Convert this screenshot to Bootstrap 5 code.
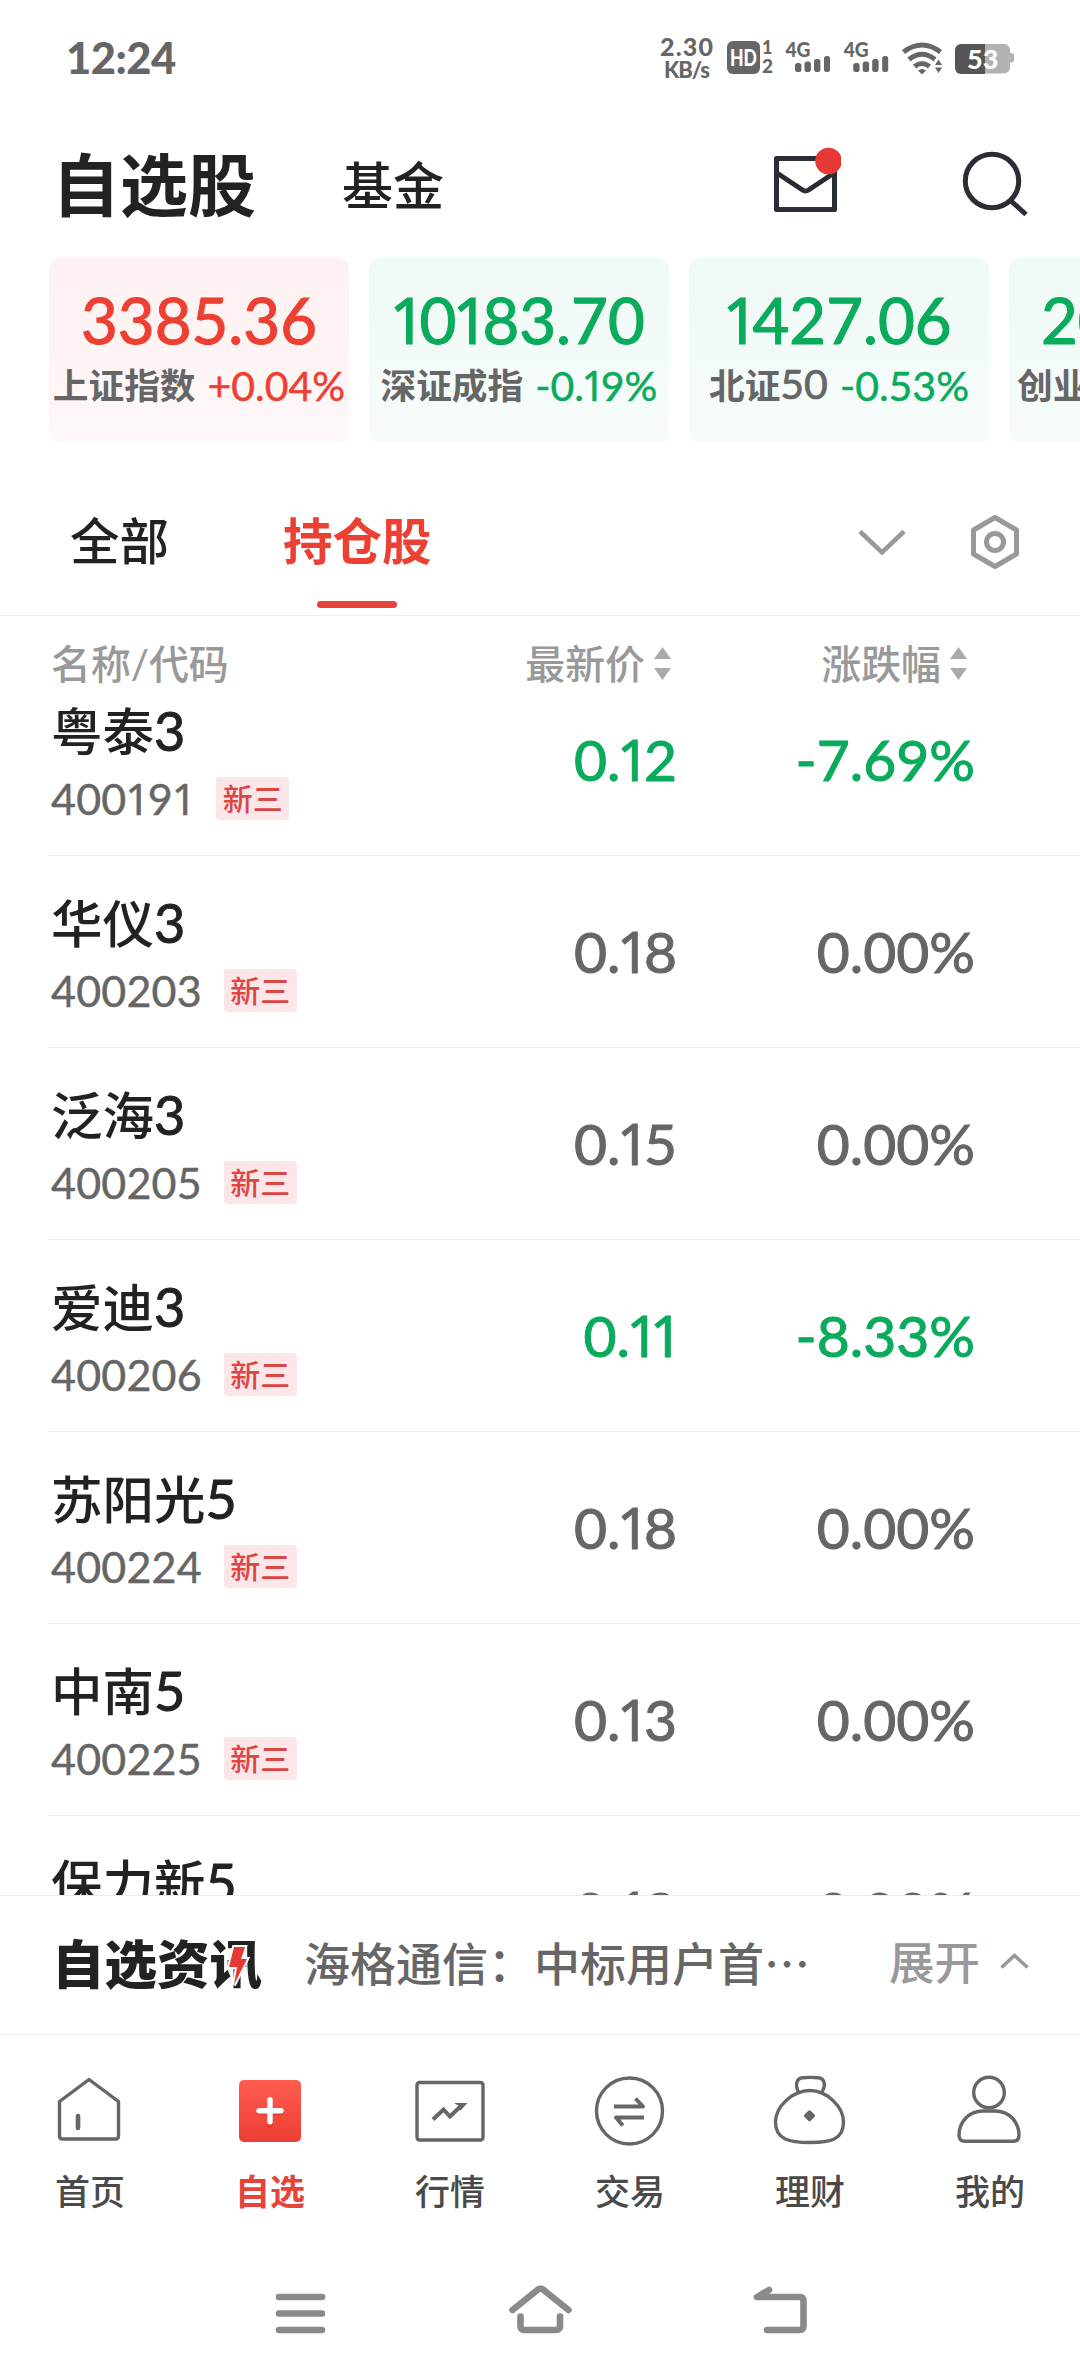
<!DOCTYPE html>
<html lang="zh-CN">
<head>
<meta charset="utf-8">
<meta name="viewport" content="width=device-width, initial-scale=1">
<title>自选股</title>
<link href="https://cdn.jsdelivr.net/npm/bootstrap@5.3.0/dist/css/bootstrap.min.css" rel="stylesheet">
<style>
  :root { --up:#ed4034; --down:#0aab5c; --ink:#222; --mid:#666; --soft:#999; --hair:#ececec; }
  body { font-family: Lato, "Noto Sans CJK SC", sans-serif; color: var(--ink); background:#fff; }
  .phone { width:1080px; height:2376px; overflow:hidden; line-height:1; }
  .phone svg { display:block; flex:none; }
  .up { color:var(--up); } .down { color:var(--down); } .flat { color:var(--mid); }
  /* narrow, footless figure one */
  .one { font-family:"Noto Sans",sans-serif; line-height:0; margin:0 -.1em 0 -.06em; }

  .statusbar { height:114px; padding:1px 65px 0 66px; color:var(--mid); }
  .clock { font-size:43.5px; font-weight:900; letter-spacing:-.5px; }

  .topbar { height:140px; padding:0 51px 3px 52px; }
  .title-main { font-size:68px; font-weight:700; padding-top:5px; }
  .title-sub { font-size:51px; font-weight:500; margin-left:86px; padding-top:5px; }

  .indices { padding:4px 0 0 49px; gap:20px; height:189px; }
  .index-card { width:300px; height:185px; border-radius:12px; padding-top:32px; }
  .index-card.rise { background:linear-gradient(#fdf2f1,#fff4f4 50%,#fef8f8); }
  .index-card.fall { background:linear-gradient(#f0f9f5,#f3fbf8 50%,#f7fcfa); }
  .index-num { font-size:63.5px; line-height:60px; -webkit-text-stroke:.018em; }
  .index-sub { font-size:41px; line-height:44px; margin-top:14px; white-space:nowrap; -webkit-text-stroke:.012em; }
  .index-sub .nm { font-size:35.7px; font-weight:700; color:var(--mid); margin-right:12px; -webkit-text-stroke:0; }
  .index-sub .nm b { font-size:41px; font-weight:400; line-height:0; -webkit-text-stroke:.018em; }

  .tabs { height:173px; padding:25px 59px 0 70px; border-bottom:1px solid var(--hair); }
  .tab-item { font-size:49.5px; font-weight:500; height:148px; position:relative; }
  .tab-item.on { color:var(--up); font-weight:700; margin-left:114px; }
  .tab-item.on::after { content:""; position:absolute; left:50%; margin-left:-40px; bottom:8px; width:80px; height:7px; border-radius:4px; background:#e5453a; }

  .thead { height:84px; padding:11px 105px 0 51px; font-size:39.9px; font-weight:500; color:var(--soft); }
  .thead svg { margin-left:9px; }
  .c-price { width:300px; } .c-pct { width:298px; }
  .thead .c-price { padding-right:6px; } .thead .c-pct { padding-right:8px; }

  .quotes { height:1195px; overflow:hidden; padding-left:49px; }
  .quote { height:192px; padding:0 105px 0 2px; border-bottom:1px solid var(--hair); }
  .quote:first-child { margin-top:-36px; }
  .q-name { font-size:51.5px; font-weight:500; line-height:60px; padding-top:2px; }
  .q-name b { font-size:54px; font-weight:400; line-height:0; -webkit-text-stroke:.018em; }
  .q-code { font-size:43px; color:var(--mid); line-height:43px; margin-top:16px; letter-spacing:.2px; -webkit-text-stroke:.01em; }
  .q-code .one { margin:0 -.05em 0 -.03em; }
  .q-tag { width:73px; height:43px; border-radius:4px; background:#fce7e8; color:#dd4444; font-size:30px; font-weight:500; line-height:42px; letter-spacing:0; margin-left:22px; -webkit-text-stroke:0; }
  .q-val { font-size:57px; -webkit-text-stroke:.018em; }

  .news { height:140px; padding:0 51px 8px 52px; border-top:1px solid var(--hair); border-bottom:1px solid var(--hair); font-family:"Noto Sans CJK SC",sans-serif; }
  .news-logo { font-size:52.5px; font-weight:900; position:relative; }
  .news-logo svg { position:absolute; left:176px; top:11px; overflow:visible; }
  .news-text { font-size:46px; font-weight:500; color:var(--mid); margin-left:42px; width:515px; white-space:nowrap; overflow:hidden; line-height:60px; }
  .news-more { font-size:45.5px; font-weight:500; color:var(--soft); margin-left:auto; }

  .tabbar { height:215px; padding-top:35px; font-size:35px; font-weight:500; }
  .tabbar a { width:180px; color:#4a4a4a; text-decoration:none; gap:24px; }
  .tabbar a.on { color:#e6443a; font-weight:700; }
  .tabbar svg { fill:none; stroke:#666; stroke-width:3.4; stroke-linejoin:round; }
  .sysbar { height:126px; fill:none; stroke:#8a8a8a; stroke-width:6.6; stroke-linecap:round; stroke-linejoin:round; }
</style>
</head>
<body>
<div class="phone d-flex flex-column">

  <div class="statusbar d-flex align-items-center justify-content-between">
    <span class="clock">12:24</span>
    <svg width="358" height="50" viewBox="657 33 358 50" fill="#666" font-family="Lato, sans-serif" font-weight="900">
      <text x="660" y="56" font-size="25" textLength="53">2.30</text>
      <text x="664" y="78" font-size="22" textLength="46">KB/s</text>
      <rect x="727" y="41" width="33" height="33" rx="6"/>
      <text x="730" y="65.500" font-size="22" fill="#fff" textLength="27" lengthAdjust="spacingAndGlyphs">HD</text>
      <text x="762" y="54" font-size="18">1</text>
      <text x="762" y="73" font-size="19">2</text>
      <g id="sig">
        <text x="785.5" y="57" font-size="21" textLength="25" lengthAdjust="spacingAndGlyphs">4G</text>
        <rect x="795" y="63" width="6.4" height="9" rx="2.5"/><rect x="804.5" y="61.5" width="6.4" height="10.5" rx="2.5"/>
        <rect x="814" y="59" width="6.4" height="13" rx="2.5"/><rect x="824" y="56" width="6" height="16" rx="2.5"/>
      </g>
      <use href="#sig" x="58.2"/>
      <g fill="none" stroke="#666" stroke-width="5">
        <path d="M903.5 52Q922 38 940.500 52M909 59.500Q922 49 935 59.500M914.500 66.500Q922 60.500 929.500 66.500"/>
      </g>
      <path d="M918 70.500Q922 67.500 926 70.500L922 74.500ZM935 65L938.500 59.500 942 65ZM935 67.500L938.500 73 942 67.500Z"/>
      <path d="M985 44h19a6 6 0 0 1 6 6v3h1.500q2.500 0 2.500 2.500v4.500q0 2.500-2.500 2.500h-1.500v5a6 6 0 0 1-6 6h-19z" fill="#b2b2b2"/>
      <path d="M985 44h-24a6 6 0 0 0-6 6v18a6 6 0 0 0 6 6h24z" fill="#555"/>
      <text x="967" y="69" font-size="27" fill="#fff">53</text>
    </svg>
  </div>

  <div class="topbar d-flex align-items-center">
    <span class="title-main">自选股</span>
    <span class="title-sub">基金</span>
    <svg class="ms-auto" width="68" height="72" viewBox="772 146 68 72" fill="none" stroke="#2a2d35" stroke-width="5" stroke-linejoin="round">
      <rect x="775.500" y="157.500" width="58" height="51"/>
      <path d="M776 172l25.500 17q3 2 6 0l25.500-17"/>
      <circle cx="827.500" cy="160" r="13.300" fill="#e63934" stroke="none"/>
    </svg>
    <svg width="68" height="72" viewBox="960 147 68 72" style="margin-left:120px" fill="none" stroke="#2a2d35" stroke-width="5">
      <circle cx="991" cy="181" r="26.700"/><path d="M1009 200l16 14.500"/>
    </svg>
  </div>

  <div class="indices d-flex overflow-hidden">
    <div class="index-card rise flex-shrink-0 text-center"><div class="index-num up">3385.36</div><div class="index-sub d-flex justify-content-center align-items-center"><span class="nm">上证指数</span><span class="up">+0.04%</span></div></div>
    <div class="index-card fall flex-shrink-0 text-center"><div class="index-num down"><span class="one">1</span>0<span class="one">1</span>83.70</div><div class="index-sub d-flex justify-content-center align-items-center"><span class="nm">深证成指</span><span class="down">-0.<span class="one">1</span>9%</span></div></div>
    <div class="index-card fall flex-shrink-0 text-center"><div class="index-num down"><span class="one">1</span>427.06</div><div class="index-sub d-flex justify-content-center align-items-center"><span class="nm">北证<b>50</b></span><span class="down">-0.53%</span></div></div>
    <div class="index-card fall flex-shrink-0 text-center"><div class="index-num down">2011.77</div><div class="index-sub d-flex justify-content-center align-items-center"><span class="nm">创业板指</span><span class="down">-0.22%</span></div></div>
  </div>

  <div class="tabs d-flex">
    <div class="tab-item d-flex align-items-center">全部</div>
    <div class="tab-item on d-flex align-items-center">持仓股</div>
    <div class="ms-auto d-flex align-items-center">
      <svg width="50" height="30" viewBox="856 530 50 30" fill="none" stroke="#999" stroke-width="4.500"><path d="M859 534.500l22 21 22-21"/></svg>
      <svg width="52" height="58" viewBox="968 513 52 58" style="margin-left:62px" fill="none" stroke="#999" stroke-width="5" stroke-linejoin="round">
        <path d="M994 517.500l21.500 12.500v24l-21.500 12.500-21.500-12.500v-24z"/><circle cx="994" cy="542" r="8.500"/>
      </svg>
    </div>
  </div>

  <div class="thead d-flex align-items-center">
    <div class="flex-grow-1">名称/代码</div>
    <div class="c-price d-flex align-items-center justify-content-end">最新价<svg width="17" height="33" fill="#aaa"><path d="M0 12L8.500 0 17 12ZM0 21L8.500 33 17 21Z"/></svg></div>
    <div class="c-pct d-flex align-items-center justify-content-end">涨跌幅<svg width="17" height="33" fill="#aaa"><path d="M0 12L8.500 0 17 12ZM0 21L8.500 33 17 21Z"/></svg></div>
  </div>

  <div class="quotes">
    <div class="quote d-flex align-items-center"><div class="flex-grow-1"><div class="q-name">粤泰<b>3</b></div><div class="q-code d-flex align-items-center"><span>400<span class="one">1</span>9<span class="one">1</span></span><span class="q-tag text-center">新三</span></div></div><div class="q-val c-price text-end down">0.<span class="one">1</span>2</div><div class="q-val c-pct text-end down">-7.69%</div></div>
    <div class="quote d-flex align-items-center"><div class="flex-grow-1"><div class="q-name">华仪<b>3</b></div><div class="q-code d-flex align-items-center">400203<span class="q-tag text-center">新三</span></div></div><div class="q-val c-price text-end flat">0.<span class="one">1</span>8</div><div class="q-val c-pct text-end flat">0.00%</div></div>
    <div class="quote d-flex align-items-center"><div class="flex-grow-1"><div class="q-name">泛海<b>3</b></div><div class="q-code d-flex align-items-center">400205<span class="q-tag text-center">新三</span></div></div><div class="q-val c-price text-end flat">0.<span class="one">1</span>5</div><div class="q-val c-pct text-end flat">0.00%</div></div>
    <div class="quote d-flex align-items-center"><div class="flex-grow-1"><div class="q-name">爱迪<b>3</b></div><div class="q-code d-flex align-items-center">400206<span class="q-tag text-center">新三</span></div></div><div class="q-val c-price text-end down">0.<span class="one">1</span><span class="one">1</span></div><div class="q-val c-pct text-end down">-8.33%</div></div>
    <div class="quote d-flex align-items-center"><div class="flex-grow-1"><div class="q-name">苏阳光<b>5</b></div><div class="q-code d-flex align-items-center">400224<span class="q-tag text-center">新三</span></div></div><div class="q-val c-price text-end flat">0.<span class="one">1</span>8</div><div class="q-val c-pct text-end flat">0.00%</div></div>
    <div class="quote d-flex align-items-center"><div class="flex-grow-1"><div class="q-name">中南<b>5</b></div><div class="q-code d-flex align-items-center">400225<span class="q-tag text-center">新三</span></div></div><div class="q-val c-price text-end flat">0.<span class="one">1</span>3</div><div class="q-val c-pct text-end flat">0.00%</div></div>
    <div class="quote d-flex align-items-center"><div class="flex-grow-1"><div class="q-name">保力新<b>5</b></div><div class="q-code d-flex align-items-center">400227<span class="q-tag text-center">新三</span></div></div><div class="q-val c-price text-end flat">0.<span class="one">1</span>8</div><div class="q-val c-pct text-end flat">0.00%</div></div>
  </div>

  <div class="news d-flex align-items-center">
    <span class="news-logo">自选资讯<svg width="20" height="40" viewBox="0 0 20 40"><path d="M6 1h11l-4 12h6L6 39l3-18H1z" fill="#e63934" stroke="#fff" stroke-width="4" paint-order="stroke"/></svg></span>
    <span class="news-text">海格通信：中标用户首…</span>
    <span class="news-more d-flex align-items-center">展开<svg style="margin-left:20px" width="29" height="17" fill="none" stroke="#999" stroke-width="3.600"><path d="M1.500 14.500L14.500 2.500 27.500 14.500"/></svg></span>
  </div>

  <div class="tabbar d-flex">
    <a href="#" class="d-flex flex-column align-items-center"><svg width="80" height="80"><path d="M39 9.500L68.500 31.500V66q0 3-3 3H12.500q-3 0-3-3V31.500Z"/><path d="M28 46v12" stroke-width="4.600" stroke-linecap="round"/></svg>首页</a>
    <a href="#" class="on d-flex flex-column align-items-center"><svg width="80" height="80"><defs><linearGradient id="rg" x2="0" y2="1"><stop stop-color="#ff5d50"/><stop offset="1" stop-color="#ed3e32"/></linearGradient></defs><rect x="9" y="10" width="62" height="62" rx="5" fill="url(#rg)" stroke="none"/><path d="M29 42.500h22M40 31.500v24" stroke="#c92c22" stroke-opacity=".35" stroke-width="6" stroke-linecap="round"/><path d="M29 40.700h22M40 29.700v22" stroke="#fff" stroke-width="5.400" stroke-linecap="round"/></svg>自选</a>
    <a href="#" class="d-flex flex-column align-items-center"><svg width="80" height="80"><rect x="7" y="12.500" width="66" height="57.500" rx="2.500"/><path d="M23 49.500L33.500 39.500 40 46.500 51.500 35.500" stroke-width="4" stroke-linejoin="miter"/><path d="M44 33h13.500l-7.500 8-1-5z" fill="#666" stroke="none"/></svg>行情</a>
    <a href="#" class="d-flex flex-column align-items-center"><svg width="80" height="80"><circle cx="39.500" cy="41" r="33"/><path d="M24 36.500H53L45.500 28.500M54 47.500H26L32.800 55.500" stroke-width="4"/></svg>交易</a>
    <a href="#" class="d-flex flex-column align-items-center"><svg width="80" height="80"><path d="M40 20.500C22 20.500 5.500 37 5.500 52 5.500 70 20 72.500 40 72.500S73.500 70 73.500 52C73.500 37 57 20.500 40 20.500Z"/><path d="M28.500 22C25 15 26 8.500 33 7.800Q40 7 48 7.800C55 8.500 56 15 52 22"/><path d="M39.500 42l3.800 3.800-3.800 3.800-3.800-3.800z" fill="#666"/></svg>理财</a>
    <a href="#" class="d-flex flex-column align-items-center"><svg width="80" height="80"><circle cx="39" cy="22.500" r="15.300"/><path d="M33 41H45C60 41 69 53 69 65Q69 71.300 63 71.300H15Q9 71.300 9 65C9 53 18 41 33 41Z"/></svg>我的</a>
  </div>

  <svg class="sysbar" width="1080" height="126" viewBox="0 2250 1080 126">
    <path d="M279 2297H322M279 2313.500H322M279 2330H322"/>
    <path d="M512.500 2310L538 2289.500Q540.500 2288 543 2289.500L568.500 2310M520.500 2316.500V2326Q520.500 2330 524.500 2330H556Q560 2330 560 2326V2316.500"/>
    <path d="M769 2290L757 2297H799.500Q803.500 2297 803.500 2301V2326Q803.500 2330 799.500 2330H767"/>
  </svg>
</div>
<script src="https://cdn.jsdelivr.net/npm/bootstrap@5.3.0/dist/js/bootstrap.bundle.min.js"></script>
</body>
</html>
